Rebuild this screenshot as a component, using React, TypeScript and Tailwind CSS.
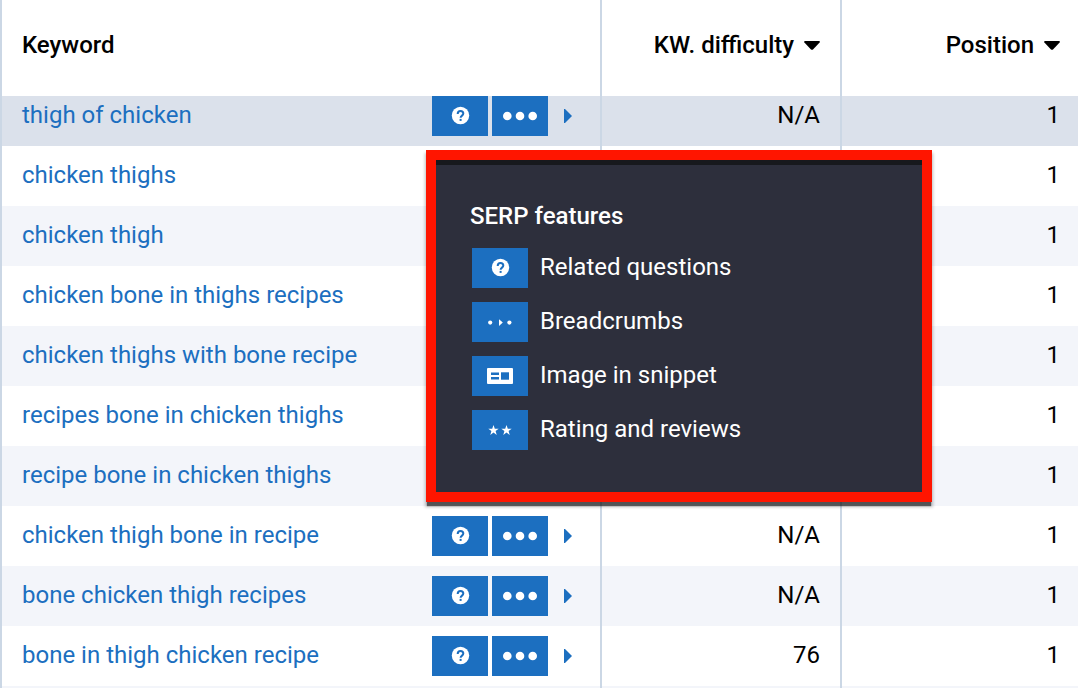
import { FC } from 'react'

interface KeywordRow {
  keyword: string
  difficulty?: string
  position: number
}

const rows: KeywordRow[] = [
  { keyword: 'thigh of chicken', difficulty: 'N/A', position: 1 },
  { keyword: 'chicken thighs', position: 1 },
  { keyword: 'chicken thigh', position: 1 },
  { keyword: 'chicken bone in thighs recipes', position: 1 },
  { keyword: 'chicken thighs with bone recipe', position: 1 },
  { keyword: 'recipes bone in chicken thighs', position: 1 },
  { keyword: 'recipe bone in chicken thighs', position: 1 },
  { keyword: 'chicken thigh bone in recipe', difficulty: 'N/A', position: 1 },
  { keyword: 'bone chicken thigh recipes', difficulty: 'N/A', position: 1 },
  { keyword: 'bone in thigh chicken recipe', difficulty: '76', position: 1 },
]

const QuestionIcon: FC = () => (
  <svg viewBox="0 0 56 40" className="h-10 w-14" aria-hidden="true">
    <circle cx="28.5" cy="19.5" r="8.7" fill="#fff" />
    <path
      d="M25.7 17.9c0-1.9 1.1-2.8 2.8-2.8s2.8 1 2.8 2.5c0 2-2.7 2-2.7 4.2"
      fill="none"
      stroke="#1c6fc0"
      strokeWidth="2"
    />
    <rect x="27.6" y="22.9" width="2" height="2" fill="#1c6fc0" />
  </svg>
)

const DotsIcon: FC = () => (
  <svg viewBox="0 0 56 40" className="h-10 w-14" fill="#fff" aria-hidden="true">
    <circle cx="15.3" cy="20" r="4.3" />
    <circle cx="28" cy="20" r="4.3" />
    <circle cx="40.7" cy="20" r="4.3" />
  </svg>
)

const BreadcrumbsIcon: FC = () => (
  <svg viewBox="0 0 56 40" className="h-10 w-14" fill="#fff" aria-hidden="true">
    <circle cx="18.2" cy="20.6" r="2.1" />
    <path d="M27 17.2 30.8 20.6 27 24z" />
    <circle cx="37.4" cy="20.6" r="2.1" />
  </svg>
)

const SnippetIcon: FC = () => (
  <svg viewBox="0 0 56 40" className="h-10 w-14" aria-hidden="true">
    <rect x="15" y="12" width="26" height="16" rx="1" fill="#fff" />
    <g fill="#1c6fc0">
      <rect x="19" y="16.5" width="8" height="2.5" />
      <rect x="19" y="21" width="8" height="2.5" />
      <rect x="29" y="16.3" width="8" height="7.4" />
    </g>
  </svg>
)

const StarsIcon: FC = () => (
  <svg viewBox="0 0 56 40" className="h-10 w-14" fill="#fff" aria-hidden="true">
    <path d="M21.5 15l1.3 3.7h3.9l-3.1 2.4 1.1 3.8-3.2-2.3-3.2 2.3 1.1-3.8-3.1-2.4h3.9z" />
    <path d="M34.5 15l1.3 3.7h3.9l-3.1 2.4 1.1 3.8-3.2-2.3-3.2 2.3 1.1-3.8-3.1-2.4h3.9z" />
  </svg>
)

const features = [
  { label: 'Related questions', icon: <QuestionIcon /> },
  { label: 'Breadcrumbs', icon: <BreadcrumbsIcon /> },
  { label: 'Image in snippet', icon: <SnippetIcon /> },
  { label: 'Rating and reviews', icon: <StarsIcon /> },
]

const SerpTooltip: FC = () => (
  <div
    role="tooltip"
    className="absolute -left-1.5 top-[54px] z-10 w-[506px] border-10 border-[#ff1500] bg-[#2d2f3c] px-9 pt-10 pb-[42px] text-white shadow-[0_5px_1px_-1px_rgba(0,0,0,0.55),0_4px_3px_1px_rgba(0,0,0,0.25)]"
  >
    {/* dark edge under the top border */}
    <div className="absolute inset-x-0 top-0 h-[5px] bg-[#17191d]" />
    <h2 className="-ml-0.5 text-2xl leading-8 font-medium">SERP features</h2>
    <ul className="mt-4 flex flex-col gap-3.5">
      {features.map((feature) => (
        <li key={feature.label} className="flex items-center gap-3">
          <span className="bg-[#1c6fc0]">{feature.icon}</span>
          <span className="pb-0.5">{feature.label}</span>
        </li>
      ))}
    </ul>
  </div>
)

const SerpButtons: FC<{ open: boolean }> = ({ open }) => (
  <div className="relative flex shrink-0 items-center">
    <div className="flex gap-1">
      <button type="button" aria-label="Related questions" className="bg-[#1c6fc0]">
        <QuestionIcon />
      </button>
      <button type="button" aria-label="More SERP features" className="bg-[#1c6fc0]">
        <DotsIcon />
      </button>
    </div>
    <button type="button" aria-label="Expand" className="ml-4">
      <svg viewBox="0 0 8 14" className="h-3.5 w-2" fill="#1c6fc0" aria-hidden="true">
        <path d="M0 0h1l7 7-7 7H0z" />
      </svg>
    </button>
    {open && <SerpTooltip />}
  </div>
)

const SortHeader: FC<{ label: string }> = ({ label }) => (
  <button type="button" className="inline-flex items-center gap-2.5 font-medium">
    {label}
    <svg viewBox="0 0 16 12" className="h-3 w-4" aria-hidden="true">
      <path d="M1.2 2h13.6c1 0 1.4.8.8 1.5L9 10.4c-.6.6-1.4.6-2 0L.4 3.5C-.2 2.8.2 2 1.2 2z" />
    </svg>
  </button>
)

export default function App() {
  return (
    <main className="h-screen overflow-hidden bg-white font-[Roboto,'Liberation_Sans',sans-serif] text-2xl text-black">
      <table className="w-full table-fixed border-separate border-spacing-0">
        <colgroup>
          <col />
          <col className="w-60" />
          <col className="w-[236px]" />
        </colgroup>
        <thead>
          <tr className="h-24">
            <th className="border-x-2 border-[#cbd7e5] p-0 pb-1.5 pl-5 text-left font-medium">Keyword</th>
            <th className="border-r-2 border-[#cbd7e5] p-0 pr-5 pb-1.5 text-right font-medium">
              <SortHeader label="KW. difficulty" />
            </th>
            <th className="p-0 pr-[18px] pb-1.5 text-right font-medium">
              <SortHeader label="Position" />
            </th>
          </tr>
        </thead>
        <tbody>
          {rows.map((row, index) => (
            <tr
              key={row.keyword}
              className={index === 0 ? 'h-[50px] bg-[#dbe1eb] align-top' : 'h-[60px] odd:bg-[#f3f5fa]'}
            >
              <td className="border-x-2 border-[#cbd7e5] p-0 pr-7 pl-5">
                <div className="flex h-10 items-center justify-between">
                  <a href="#" className="pb-0.5 text-[#1c6fc0]">
                    {row.keyword}
                  </a>
                  <SerpButtons open={index === 0} />
                </div>
              </td>
              <td className="border-r-2 border-[#cbd7e5] p-0 pr-5 text-right">
                <div className="h-10 pb-0.5 leading-[38px]">{row.difficulty}</div>
              </td>
              <td className="p-0 pr-[18px] text-right">
                <div className="h-10 pb-0.5 leading-[38px]">{row.position}</div>
              </td>
            </tr>
          ))}
          <tr className="h-[60px] bg-[#f3f5fa]">
            <td className="border-x-2 border-[#cbd7e5]" />
            <td className="border-r-2 border-[#cbd7e5]" />
            <td />
          </tr>
        </tbody>
      </table>
    </main>
  )
}
